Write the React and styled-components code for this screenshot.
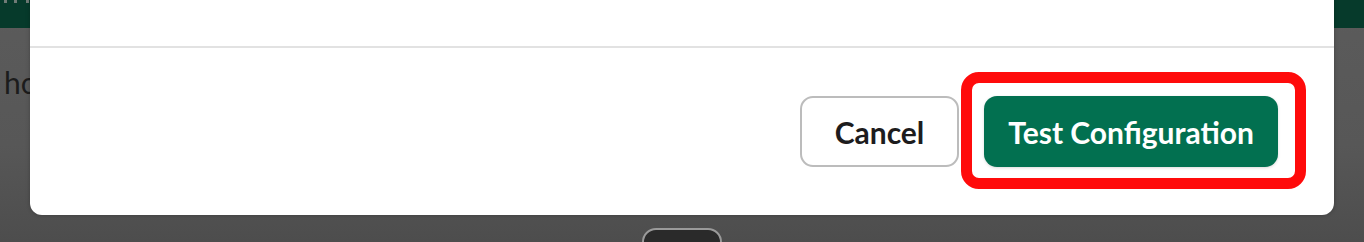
import styled, { createGlobalStyle } from "styled-components";

const GlobalStyle = createGlobalStyle`
  html, body {
    margin: 0;
    padding: 0;
    background: #555555;
  }
  * {
    box-sizing: border-box;
  }
`;

const Screen = styled.div`
  position: relative;
  width: 1364px;
  height: 242px;
  overflow: hidden;
  font-family: Lato, "Noto Sans", sans-serif;
`;

// page behind the dimmed overlay
const Backdrop = styled.div`
  display: flex;
  flex-direction: column;
  height: 100%;
  background: linear-gradient(to bottom, #5b5b5b 0%, #575757 60%, #4d4d4d 100%);
`;

const TopBar = styled.div`
  display: flex;
  gap: 5px;
  height: 28px;
  padding-left: 4px;
  background: #063a2b;
`;

const Dot = styled.span`
  width: ${(p) => p.$w}px;
  height: 3px;
  margin-left: ${(p) => p.$ml || 0}px;
  background: #6f7a76;
`;

const BackText = styled.div`
  padding: 34px 0 0 4px;
  font-size: 30px;
  line-height: 40px;
  color: #1c1c1c;
`;

const Modal = styled.div`
  position: absolute;
  left: 30px;
  width: 1304px;
  bottom: 27px;
  display: flex;
  flex-direction: column;
  background: #ffffff;
  border-radius: 12px;
  box-shadow: 0 0 4px rgba(0, 0, 0, 0.25);
`;

const ModalBody = styled.div`
  height: 246px;
`;

const Footer = styled.div`
  display: flex;
  justify-content: flex-end;
  align-items: center;
  gap: 25px;
  padding: 48px 56px 48px 0;
  border-top: 2px solid #e2e2e2;
`;

const Button = styled.button`
  height: 71px;
  padding: 0 ${(p) => (p.$primary ? 24 : 33)}px;
  border-radius: 13px;
  font-family: Lato, "Noto Sans", sans-serif;
  font-weight: 700;
  font-size: 30px;
  cursor: pointer;
  border: ${(p) => (p.$primary ? "none" : "2px solid #bcbcbc")};
  background: ${(p) => (p.$primary ? "#027050" : "#ffffff")};
  color: ${(p) => (p.$primary ? "#ffffff" : "#1d1c1d")};
  box-shadow: ${(p) => (p.$primary ? "0 1px 3px rgba(0,0,0,0.15)" : "none")};
`;

const Highlight = styled.span`
  position: relative;
  display: inline-flex;

  &::after {
    content: "";
    position: absolute;
    left: -23px;
    right: -28px;
    top: -24px;
    bottom: -22px;
    border: 11px solid #ff0b0b;
    border-radius: 18px;
    pointer-events: none;
  }
`;

const Handle = styled.div`
  position: absolute;
  left: 642px;
  top: 228px;
  width: 80px;
  height: 28px;
  background: #2a2a2a;
  border: 2px solid #9a9a9a;
  border-radius: 14px;
`;

export default function App() {
  return (
    <>
      <GlobalStyle />
      <Screen>
        <Backdrop>
          <TopBar>
            <Dot $w={3} />
            <Dot $w={3} $ml={2} />
            <Dot $w={3} $ml={4} />
          </TopBar>
          <BackText>ho</BackText>
        </Backdrop>
        <Modal>
          <ModalBody />
          <Footer>
            <Button>Cancel</Button>
            <Highlight>
              <Button $primary>Test Configuration</Button>
            </Highlight>
          </Footer>
        </Modal>
        <Handle />
      </Screen>
    </>
  );
}
